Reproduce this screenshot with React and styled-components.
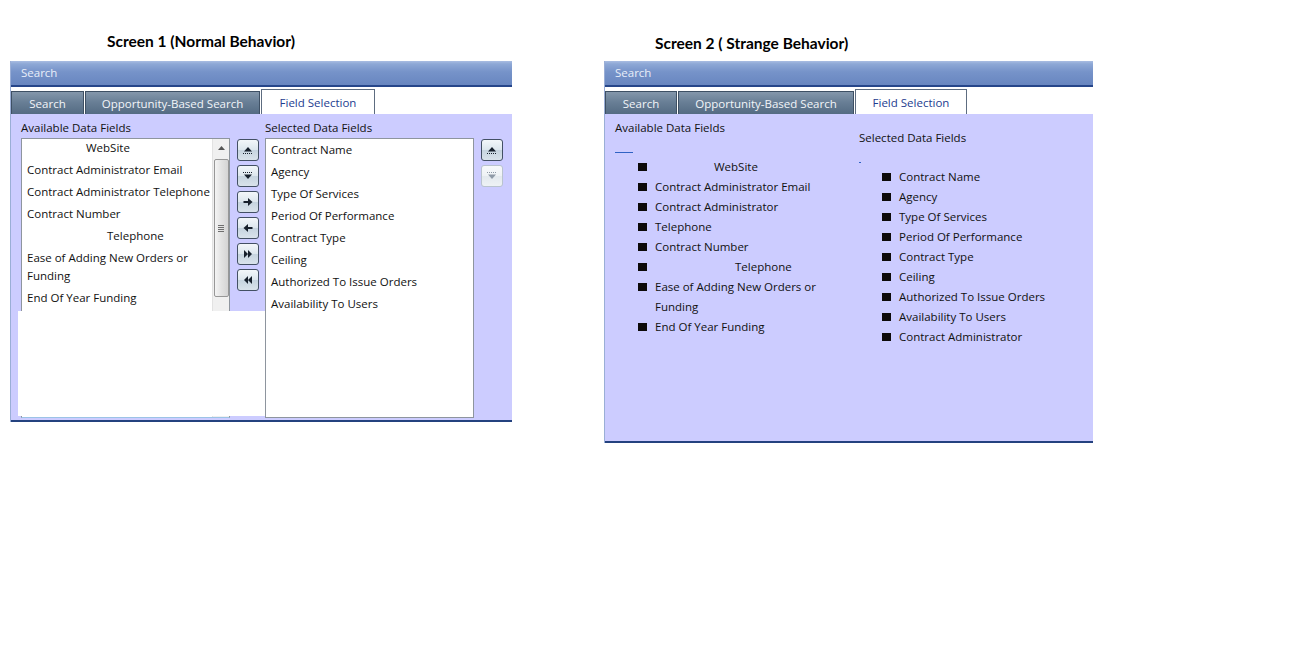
import React from 'react';
import styled, { createGlobalStyle } from 'styled-components';

const GlobalStyle = createGlobalStyle`
  html, body {
    margin: 0;
    padding: 0;
    background: #ffffff;
  }
  body {
    font-family: "Open Sans", "Noto Sans", sans-serif;
    font-size: 11px;
    color: #111;
  }
`;

const Page = styled.div`
  display: flex;
  align-items: flex-start;
  width: 1293px;
  height: 665px;
  background: #fff;
`;

const Screen = styled.div`
  margin-left: ${(p) => p.offset}px;
  width: ${(p) => p.width}px;
`;

const Title = styled.div`
  box-sizing: border-box;
  height: 61px;
  padding-top: ${(p) => p.top}px;
  padding-left: ${(p) => p.indent}px;
  font-family: Lato, "Liberation Sans", sans-serif;
  font-weight: 700;
  font-size: 15.5px;
  line-height: 20px;
  color: #000;
`;

const Panel = styled.div`
  border-left: 1px solid #9aaed6;
`;

const Header = styled.div`
  height: 24px;
  line-height: 24px;
  padding-left: 10px;
  color: #e8eef9;
  font-size: 11.5px;
  background: linear-gradient(#a9bde2 0%, #8ea8d6 12%, #7693c9 45%, #6886c0 100%);
  border-bottom: 2px solid #26468a;
`;

const TabStrip = styled.div`
  display: flex;
  align-items: flex-end;
  height: 27px;
  background: #fff;
`;

const Tab = styled.div`
  box-sizing: border-box;
  width: ${(p) => p.width}px;
  height: ${(p) => (p.active ? 25 : 23)}px;
  display: flex;
  align-items: center;
  justify-content: center;
  padding-top: ${(p) => (p.active ? 0 : 1)}px;
  font-size: 11.5px;
  color: ${(p) => (p.active ? '#1d3c8f' : '#f2f5f9')};
  background: ${(p) =>
    p.active ? '#ffffff' : 'linear-gradient(#8497ab 0%, #697f96 45%, #546b83 100%)'};
  border: 1px solid ${(p) => (p.active ? '#5d6c80' : '#3e5064')};
  border-bottom: none;
  margin-right: 1px;
`;

const Body = styled.div`
  position: relative;
  box-sizing: border-box;
  height: ${(p) => p.height}px;
  background: #ccccff;
  border-bottom: 2px solid #24427f;
`;

/* ---------- screen 1 ---------- */

const FieldGrid = styled.div`
  display: grid;
  grid-template-columns: 209px 35px 209px 29px;
  grid-template-rows: 16px 280px;
  row-gap: 2px;
  padding: 6px 0 0 10px;
`;

const Label = styled.div`
  line-height: 16px;
  font-size: 11.5px;
  color: #111;
`;

const ListBox = styled.div`
  position: relative;
  box-sizing: border-box;
  background: #fff;
  border: 1px solid #8e959e;
  border-bottom-color: ${(p) => (p.scroll ? '#9cc3e6' : '#8e959e')};
  overflow: hidden;
  padding-right: ${(p) => (p.scroll ? 16 : 0)}px;
`;

const Items = styled.div`
  margin-top: ${(p) => p.shift || 0}px;
`;

const Item = styled.div`
  padding: 2px 5px;
  line-height: 18px;
  font-size: 11.5px;
  white-space: pre;
  padding-left: ${(p) => 5 + (p.indent || 0)}px;
`;

const ScrollBar = styled.div`
  position: absolute;
  top: 0;
  right: 0;
  bottom: 0;
  width: 16px;
  background: #f0f0f0;
  border-left: 1px solid #e2e2e2;
  display: flex;
  flex-direction: column;
  align-items: center;
`;

const ScrollArrow = styled.div`
  height: 17px;
  display: flex;
  align-items: center;
  justify-content: center;
`;

const Thumb = styled.div`
  box-sizing: border-box;
  width: 15px;
  height: 138px;
  margin-top: 3px;
  border: 1px solid #979797;
  border-radius: 2px;
  background: linear-gradient(90deg, #f4f4f4, #e2e2e2 50%, #d4d4d4);
  display: flex;
  align-items: center;
  justify-content: center;
`;

const Grip = styled.div`
  width: 6px;
  height: 7px;
  background: repeating-linear-gradient(#6e6e6e 0 1px, transparent 1px 2px);
`;

const ButtonColumn = styled.div`
  display: flex;
  flex-direction: column;
  gap: 4px;
  padding: 1px 0 0 ${(p) => p.inset}px;
`;

const MoveButton = styled.div`
  box-sizing: border-box;
  width: 22px;
  height: 22px;
  border-radius: 3px;
  border: 1px solid ${(p) => (p.disabled ? '#b9c3ce' : '#435064')};
  background: ${(p) =>
    p.disabled
      ? 'linear-gradient(#f7f9fb, #eef2f5 50%, #e3e9ee 51%, #eef2f5)'
      : 'linear-gradient(#f3f7fa, #dce6ed 50%, #c6d4df 51%, #d9e3eb)'};
  color: ${(p) => (p.disabled ? '#8f9aa7' : '#17202c')};
  display: flex;
  align-items: center;
  justify-content: center;
`;

const Glitch = styled.div`
  position: absolute;
  left: 7px;
  top: 197px;
  width: 247px;
  height: 105px;
  background: #fff;
`;

/* ---------- screen 2 ---------- */

const Columns = styled.div`
  display: flex;
  padding: 6px 0 0 10px;
`;

const Column = styled.div`
  width: ${(p) => p.width}px;
  padding-top: ${(p) => p.top || 0}px;
`;

const Rule = styled.div`
  width: ${(p) => p.width}px;
  height: 1px;
  background: #2f62c4;
  margin-top: ${(p) => p.gap}px;
`;

const BulletList = styled.ul`
  list-style: none;
  margin: ${(p) => p.gap}px 0 0;
  padding: 0;
`;

const BulletItem = styled.li`
  display: flex;
  align-items: flex-start;
  line-height: 20px;
  font-size: 11.5px;
`;

const Square = styled.span`
  flex: none;
  width: 9px;
  height: 8px;
  margin: 6px 8px 0 23px;
  background: #0d0a0a;
`;

const BulletText = styled.span`
  white-space: pre;
  padding-left: ${(p) => p.indent || 0}px;
`;

/* ---------- icons ---------- */

const Icon = ({ kind }) => {
  const dots = (y) => (
    <line x1="1" y1={y} x2="11" y2={y} stroke="currentColor" strokeWidth="1" strokeDasharray="1 1" />
  );
  return (
    <svg width="12" height="12" viewBox="0 0 12 12" fill="currentColor">
      {kind === 'up' && (
        <>
          <path d="M2 7.5 L6 3 L10 7.5 Z" />
          {dots(9.5)}
        </>
      )}
      {kind === 'down' && (
        <>
          {dots(2.5)}
          <path d="M2 4.5 L10 4.5 L6 9 Z" />
        </>
      )}
      {kind === 'right' && <path d="M1.5 5h4.5V2l4.5 4-4.5 4V7H1.5z" />}
      {kind === 'left' && <path d="M10.5 5H6V2L1.5 6 6 10V7h4.5z" />}
      {kind === 'allRight' && <path d="M2 2l4 4-4 4z M6 2l4 4-4 4z" />}
      {kind === 'allLeft' && <path d="M10 2L6 6l4 4z M6 2L2 6l4 4z" />}
    </svg>
  );
};

const available1 = [
  { text: 'WebSite', indent: 59 },
  { text: 'Contract Administrator Email' },
  { text: 'Contract Administrator Telephone' },
  { text: 'Contract Number' },
  { text: 'Telephone', indent: 80 },
  { text: 'Ease of Adding New Orders or\nFunding' },
  { text: 'End Of Year Funding' },
  { text: 'Contract Administrator Name' },
];

const selected1 = [
  'Contract Name',
  'Agency',
  'Type Of Services',
  'Period Of Performance',
  'Contract Type',
  'Ceiling',
  'Authorized To Issue Orders',
  'Availability To Users',
];

const available2 = [
  { text: 'WebSite', indent: 59 },
  { text: 'Contract Administrator Email' },
  { text: 'Contract Administrator' },
  { text: 'Telephone' },
  { text: 'Contract Number' },
  { text: 'Telephone', indent: 80 },
  { text: 'Ease of Adding New Orders or\nFunding' },
  { text: 'End Of Year Funding' },
];

const selected2 = [...selected1, 'Contract Administrator'];

const Tabs = ({ widths }) => (
  <TabStrip>
    <Tab width={widths[0]}>Search</Tab>
    <Tab width={widths[1]}>Opportunity-Based Search</Tab>
    <Tab width={widths[2]} active>Field Selection</Tab>
  </TabStrip>
);

const App = () => (
  <Page>
    <GlobalStyle />

    <Screen offset={10} width={502}>
      <Title top={31} indent={97}>Screen 1 (Normal Behavior)</Title>
      <Panel>
        <Header>Search</Header>
        <Tabs widths={[73, 175, 114]} />
        <Body height={308}>
          <FieldGrid>
            <Label>Available Data Fields</Label>
            <span />
            <Label>Selected Data Fields</Label>
            <span />

            <ListBox scroll>
              <Items shift={-2}>
                {available1.map((it, i) => (
                  <Item key={i} indent={it.indent}>{it.text}</Item>
                ))}
              </Items>
              <ScrollBar>
                <ScrollArrow>
                  <svg width="7" height="4" viewBox="0 0 7 4">
                    <path d="M0 4 L3.5 0 L7 4 Z" fill="#555" />
                  </svg>
                </ScrollArrow>
                <Thumb>
                  <Grip />
                </Thumb>
              </ScrollBar>
            </ListBox>

            <ButtonColumn inset={7}>
              <MoveButton><Icon kind="up" /></MoveButton>
              <MoveButton><Icon kind="down" /></MoveButton>
              <MoveButton><Icon kind="right" /></MoveButton>
              <MoveButton><Icon kind="left" /></MoveButton>
              <MoveButton><Icon kind="allRight" /></MoveButton>
              <MoveButton><Icon kind="allLeft" /></MoveButton>
            </ButtonColumn>

            <ListBox>
              <Items>
                {selected1.map((t) => (
                  <Item key={t}>{t}</Item>
                ))}
              </Items>
            </ListBox>

            <ButtonColumn inset={7}>
              <MoveButton><Icon kind="up" /></MoveButton>
              <MoveButton disabled><Icon kind="down" /></MoveButton>
            </ButtonColumn>
          </FieldGrid>
          <Glitch />
        </Body>
      </Panel>
    </Screen>

    <Screen offset={92} width={489}>
      <Title top={33} indent={51}>Screen 2 ( Strange Behavior)</Title>
      <Panel>
        <Header>Search</Header>
        <Tabs widths={[72, 176, 112]} />
        <Body height={329}>
          <Columns>
            <Column width={244}>
              <Label>Available Data Fields</Label>
              <Rule width={18} gap={16} />
              <BulletList gap={4}>
                {available2.map((it, i) => (
                  <BulletItem key={i}>
                    <Square />
                    <BulletText indent={it.indent}>{it.text}</BulletText>
                  </BulletItem>
                ))}
              </BulletList>
            </Column>
            <Column width={230} top={10}>
              <Label>Selected Data Fields</Label>
              <Rule width={2} gap={16} />
              <BulletList gap={4}>
                {selected2.map((t) => (
                  <BulletItem key={t}>
                    <Square />
                    <BulletText>{t}</BulletText>
                  </BulletItem>
                ))}
              </BulletList>
            </Column>
          </Columns>
        </Body>
      </Panel>
    </Screen>
  </Page>
);

export default App;
